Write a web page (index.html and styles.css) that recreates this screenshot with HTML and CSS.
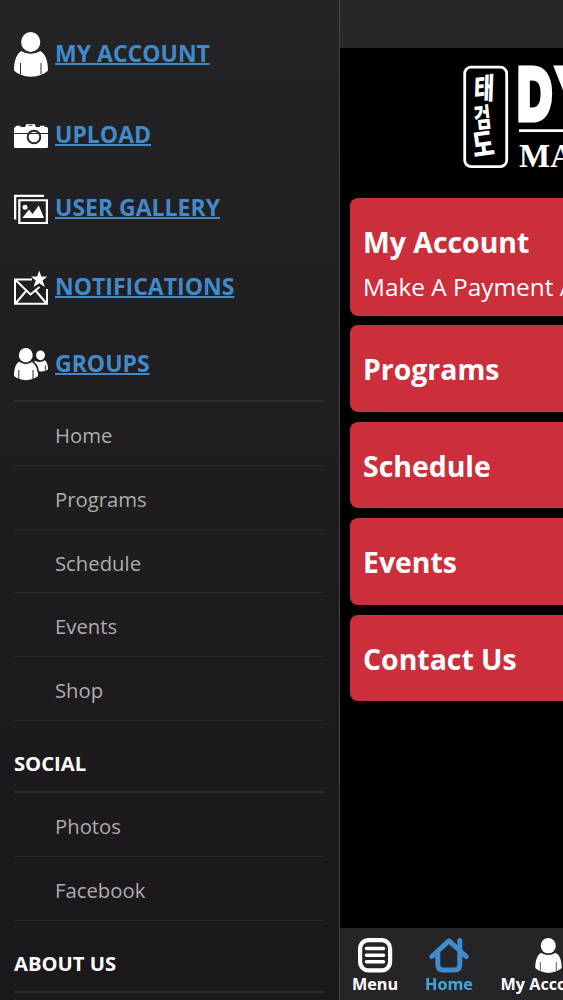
FILE: index.html
```html
<!DOCTYPE html>
<html lang="en">
<head>
	<meta charset="UTF-8">
	<title>Menu</title>
	<link rel="stylesheet" href="styles.css">
</head>
<body>
<svg width="0" height="0" class="defs">
	<symbol id="person" viewBox="0 0 34 45">
		<ellipse cx="16.7" cy="10" rx="9.6" ry="10"/>
		<path d="M8 18.5C11 22 22.500 22 25.500 18.500C31 21 34 28 34 38.500C32 40.500 30 41.500 27.500 42.500C21 45.500 13 45.500 6.500 42.500C4 41.500 2 40.500 0 38.500C0 28 3 21 8 18.500Z"/>
		<path class="gap" d="M7 18Q16.700 24 26.500 18"/>
		<path class="cut" d="M6.500 31V42M27 31V42"/>
	</symbol>
</svg>
<div id="app">
	<div class="sidebar">
		<div class="account">
			<a href="#"><svg width="34" height="45"><use href="#person"/></svg><span>MY ACCOUNT</span></a>
			<a href="#"><svg width="34" height="25" viewBox="0 0 34 25">
				<path d="M0 5.500Q0 4 1.500 4H1.800V2.800H6.500V4H11L12.500 1H20.500L22 4H26V2.800H30.500V4H32.500Q34 4 34 5.500V23.500Q34 25 32.500 25H1.500Q0 25 0 23.500Z"/>
				<path class="cut" d="M0 10.500H34M14.500 2.300H18.500"/>
				<circle class="cut lens" cx="20" cy="14" r="6.300"/>
			</svg><span>UPLOAD</span></a>
			<a href="#"><svg width="34" height="30" viewBox="0 0 34 30">
				<path d="M0 0.800H30V3H2.300V25.500H0Z"/>
				<path fill-rule="evenodd" d="M4.200 5.200H34V30H4.200ZM6.400 7.300V27.900H31.800V7.300Z"/>
				<circle cx="11" cy="13.200" r="2.500"/>
				<path d="M8.300 24L15 15.500L18.500 20L24.800 11.500L30 24Z"/>
			</svg><span>USER GALLERY</span></a>
			<a href="#"><svg width="34" height="35" viewBox="0 0 34 35">
				<path class="line" d="M18 9.500H1V33.800H33V19M1.500 10L16.500 24.500L25.500 17M1.500 33.500L12.500 20.500M32.500 33.500L21.500 20.500"/>
				<path d="M25.200 0.500L27.300 6.500H33.300L28.600 10.500L30.800 17L25.200 13.200L19.600 17L21.700 10.500L17 6.500H23.200Z"/>
			</svg><span>NOTIFICATIONS</span></a>
			<a href="#" class="groups"><svg width="34" height="33" viewBox="0 0 34 33">
				<ellipse cx="26.500" cy="7.300" rx="4.400" ry="4.900"/>
				<path d="M21 12.800Q26.500 15.500 31 12.200Q34 15 34 21.500Q29 24.500 24.500 23Q24 17 19.500 14.500Z"/>
				<path class="cut" d="M31.300 17.500V22.500"/>
				<path d="M5.500 13.500C8 16 16 16 18.500 13.500C22.500 15.500 24 20 24 28C18 33.500 6 33.500 0 28C0 20 2 15.500 5.500 13.500Z"/>
				<path class="gap" d="M5 12.500Q11.800 18.500 18.500 12.500M18.500 13.500Q23.500 16.500 24.200 24"/>
				<ellipse cx="11.800" cy="7.200" rx="6.900" ry="7.200"/>
				<path class="cut" d="M4.800 22V31M19 22V31"/>
			</svg><span>GROUPS</span></a>
		</div>
		<ul>
			<li>Home</li>
			<li>Programs</li>
			<li>Schedule</li>
			<li>Events</li>
			<li>Shop</li>
		</ul>
		<h3>SOCIAL</h3>
		<ul>
			<li>Photos</li>
			<li>Facebook</li>
		</ul>
		<h3>ABOUT US</h3>
		<ul></ul>
	</div><!-- side menu -->
	<div class="page">
		<div class="topbar"></div>
		<svg class="logo" width="223" height="140" viewBox="340 49 223 140">
			<rect x="464.700" y="67.200" width="42" height="99.500" rx="6.500"/>
			<g class="seal">
				<text transform="translate(473.500 100) rotate(-4) skewX(-6) scale(.8 1.050)">태</text>
				<text transform="translate(475 128) rotate(-6) scale(.66 .950)">검</text>
				<text transform="translate(474 157) rotate(-8) scale(.84 1.100)">도</text>
			</g>
			<text class="name" transform="translate(517.500 119.200) scale(.66 1)">D</text>
			<text class="name" transform="translate(556.500 119.200) scale(.66 1)">Y</text>
			<path d="M519 130.700H563"/>
			<text class="martial" x="519" y="166.500">MA</text>
		</svg>
		<div class="cards">
			<div class="card big">
				<h2>My Account</h2>
				<p>Make A Payment And More</p>
			</div>
			<div class="card"><h2>Programs</h2></div>
			<div class="card"><h2>Schedule</h2></div>
			<div class="card"><h2>Events</h2></div>
			<div class="card"><h2>Contact Us</h2></div>
		</div>
		<div class="tabs">
			<div class="tab">
				<svg width="36" height="35" viewBox="0 0 36 35">
					<rect class="stroke" x="3.100" y="2.100" width="30" height="30.300" rx="8.500"/>
					<path class="stroke bars" d="M9.500 10.500H26.500M9.500 17.200H26.500M9.500 23.800H26.500"/>
				</svg>
				<span>Menu</span>
			</div>
			<div class="tab active">
				<svg width="40" height="35" viewBox="0 0 40 35">
					<path class="stroke" d="M2.800 18.500L20 2.800L37.200 18.500M30.800 12V2.500M8.800 15.500V26.500Q8.800 32 14.300 32H25.300Q30.800 32 30.800 26.500V15.500"/>
				</svg>
				<span>Home</span>
			</div>
			<div class="tab">
				<svg width="27" height="35"><use href="#person"/></svg>
				<span>My Account</span>
			</div>
		</div>
	</div><!-- current page -->
</div>
</body>
</html>
```
FILE: styles.css
```css
* {
	box-sizing: border-box;
}
body {
	margin: 0;
	background: #000;
	font-family: "Open Sans", sans-serif;
}
.defs {
	position: absolute;
}
#app {
	display: flex;
	width: 563px;
	height: 1000px;
	overflow: hidden;
}
svg {
	display: block;
	flex: none;
	fill: #fff;
}
.cut, .gap {
	fill: none;
	stroke: #29282a;
	stroke-width: 1;
}
.gap {
	stroke-width: 1.600;
}
.lens {
	stroke-width: 2;
}
.line {
	fill: none;
	stroke: #fff;
	stroke-width: 2;
}
/* side menu */
.sidebar {
	flex: none;
	width: 340px;
	height: 1000px;
	padding: 0 15px 0 14px;
	overflow: hidden;
	background: linear-gradient(#242325, #1f1d20 45%, #1a181b);
	border-right: 1px solid #454446;
}
.account {
	display: flex;
	flex-direction: column;
	gap: 46px;
	height: 400px;
	padding-top: 32px;
}
.account a {
	display: flex;
	align-items: center;
	color: #428bca;
	font-size: 23px;
	font-weight: 700;
	line-height: 24px;
	white-space: nowrap;
	text-decoration-thickness: 2px;
	text-underline-offset: 1px;
}
.account span {
	margin: -4px 0 0 7px;
}
.account .groups {
	margin-top: -3px;
}
ul {
	margin: 0;
	padding: 0;
	list-style: none;
	border-top: 2px solid #2d2c2e;
}
li {
	height: 63.8px;
	padding-left: 41px;
	line-height: 66px;
	font-size: 20.3px;
	color: #aeadae;
	border-bottom: 1px solid #2a292b;
}
h3 {
	height: 70.5px;
	margin: 0;
	padding-top: 8px;
	line-height: 68.5px;
	font-size: 20.2px;
	font-weight: 700;
	color: #fff;
}
h3 + ul li {
	height: 63.6px;
	line-height: 66px;
}
/* page */
.page {
	flex: none;
	display: flex;
	flex-direction: column;
	width: 223px;
	overflow: hidden;
	color: #fff;
}
.topbar {
	height: 48px;
	background: #272628;
}
.logo {
	margin-top: 1px;
}
.logo rect, .logo path {
	fill: none;
	stroke: #fff;
	stroke-width: 2.800;
}
.seal {
	font: 900 28px "Noto Sans CJK KR", sans-serif;
}
.name {
	font: bold 72px "Liberation Sans", sans-serif;
	stroke: #fff;
	stroke-width: 7;
}
.martial {
	font: bold 33px "Liberation Serif", serif;
}
.cards {
	display: flex;
	flex-direction: column;
	gap: 9.7px;
	padding: 8.7px 0 0 10px;
	flex: 1;
}
.card {
	height: 86.7px;
	padding: 0 13px;
	border-radius: 8px 0 0 8px;
	background: #cc2f3c;
	white-space: nowrap;
}
.card.big {
	height: 118px;
	padding-top: 22px;
}
.card h2 {
	margin: 0;
	line-height: 89px;
	font-size: 28.4px;
	font-weight: 700;
}
.card.big h2 {
	line-height: 44.5px;
}
.card p {
	margin: 0;
	line-height: 46px;
	font-size: 24.4px;
}
.tabs {
	display: flex;
	height: 72px;
	padding-top: 10px;
	background: #252426;
	font-size: 16.2px;
	font-weight: 700;
	line-height: 22px;
	white-space: nowrap;
}
.tab {
	flex: none;
	display: flex;
	flex-direction: column;
	align-items: center;
	width: 70px;
}
.tab:nth-child(2) {
	width: 78px;
}
.tab:nth-child(3) {
	width: 120px;
}
.stroke {
	fill: none;
	stroke: #fff;
	stroke-width: 4.200;
	stroke-linecap: round;
	stroke-linejoin: round;
}
.bars {
	stroke-width: 3.600;
}
.active {
	color: #45a5dc;
}
.active .stroke {
	stroke: #428bca;
	stroke-width: 5;
}
```
